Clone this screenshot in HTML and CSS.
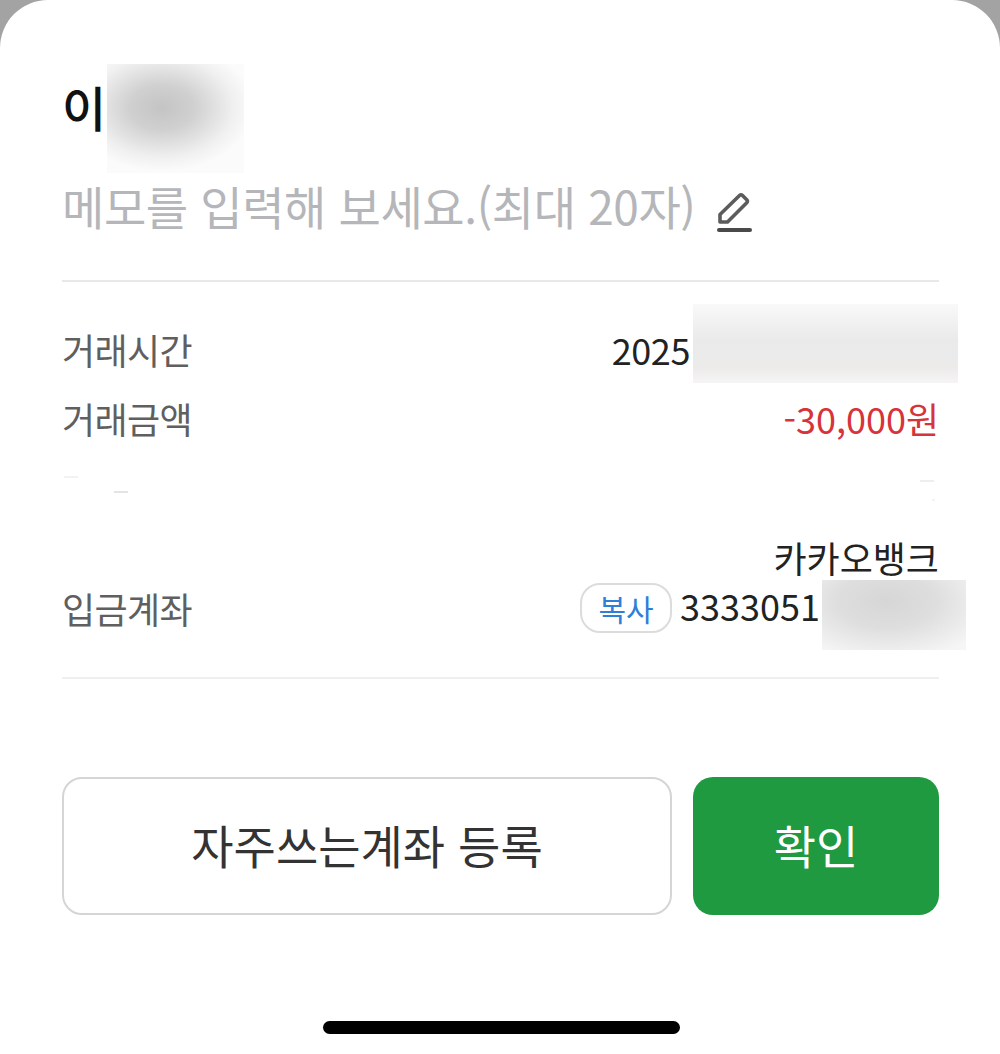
FILE: index.html
```html
<!DOCTYPE html>
<html lang="ko">
<head>
    <meta charset="UTF-8">
    <meta name="viewport" content="width=device-width, initial-scale=1.0">
    <title>거래 상세</title>
    <link rel="stylesheet" href="styles.css">
</head>
<body>
    <div class="sheet">
        <div class="name-row">
            <span class="name">이</span>
            <span class="blur blur-name"></span>
        </div>
        <div class="memo-row">
            <span class="memo">메모를 입력해 보세요.(최대 20자)</span>
            <svg class="edit-icon" width="36" height="42" viewBox="0 0 36 42" fill="none">
                <path d="M3 31 V23.5 L22.5 4.5 Q24 3 25.5 4.5 L30 9 Q31 10.5 29.5 12 L10.5 31 Z" stroke="#5c5c5c" stroke-width="3.6" stroke-linejoin="round"/>
                <path d="M2 39 H33" stroke="#4a4a4a" stroke-width="4" stroke-linecap="round"/>
            </svg>
        </div>

        <div class="details">
            <div class="detail-row row-time">
                <span class="label">거래시간</span>
                <span class="value value-time">2025<span class="blur blur-time"></span></span>
            </div>
            <div class="detail-row row-amount">
                <span class="label">거래금액</span>
                <span class="value amount">-30,000원</span>
            </div>
            <div class="detail-row row-hidden">
                <span class="speck speck-left"></span>
                <span class="speck speck-right"></span>
            </div>
            <div class="detail-row row-account">
                <span class="label">입금계좌</span>
                <div class="account">
                    <span class="value">카카오뱅크</span>
                    <div class="account-line">
                        <button class="copy" type="button">복사</button>
                        <span class="value account-no">3333051</span>
                        <span class="blur blur-account"></span>
                    </div>
                </div>
            </div>
        </div>

        <div class="actions">
            <button class="btn btn-favorite" type="button">자주쓰는계좌 등록</button>
            <button class="btn btn-ok" type="button">확인</button>
        </div>

        <div class="home-indicator"></div>
    </div>
</body>
</html>
```

FILE: styles.css
```css
* {
    box-sizing: border-box;
}
html, body {
    margin: 0;
    height: 100%;
}
body {
    background-color: #a3a3a3;
    font-family: "Noto Sans CJK KR", "Noto Sans", sans-serif;
    overflow: hidden;
}
.sheet {
    height: 1054px;
    background-color: #fff;
    border-radius: 48px 48px 0 0;
    padding: 64px 61px 0 62px;
    display: flex;
    flex-direction: column;
}
.name-row {
    display: flex;
    height: 109px;
}
.name {
    font-size: 48px;
    font-weight: 500;
    line-height: 84px;
    width: 45px;
    color: #111;
}
.blur {
    display: block;
    flex: none;
}
.blur-name {
    width: 137px;
    height: 109px;
    background: radial-gradient(ellipse 92px 64px at 40% 40%, #c4c4c4 0%, #d0d0d0 35%, #f0f0f0 78%, #fbfbfb 100%);
}
.memo-row {
    display: flex;
    align-items: center;
    gap: 22px;
    height: 74px;
    margin-top: -2px;
    padding-bottom: 2px;
}
.memo {
    font-size: 46px;
    line-height: 56px;
    letter-spacing: -0.4px;
    color: #b5b6ba;
    white-space: nowrap;
    margin-bottom: 4px;
}
.edit-icon {
    flex: none;
    margin-top: 10px;
}
.details {
    margin-top: 35px;
    border-top: 2px solid #e8e8ea;
    border-bottom: 2px solid #efeff0;
    height: 399px;
}
.detail-row {
    display: flex;
    justify-content: space-between;
    align-items: center;
}
.label {
    font-size: 36px;
    color: #5f5f5f;
    letter-spacing: -0.6px;
    line-height: 44px;
}
.value {
    font-size: 36px;
    line-height: 44px;
    color: #222;
}
.row-time {
    margin-top: 45px;
}
.value-time {
    display: flex;
    align-items: center;
    margin-right: -19px;
    height: 44px;
    letter-spacing: -0.4px;
}
.blur-time {
    width: 265px;
    height: 79px;
    margin-left: 3px;
    margin-bottom: 12px;
    background: linear-gradient(180deg, #f9f9f9 0%, #ebeaea 45%, #ecebea 80%, #f6f5f5 100%);
}
.row-amount {
    margin-top: 25px;
}
.amount {
    color: #d6333a;
}
.row-hidden {
    height: 30px;
    margin-top: 35px;
    align-items: flex-start;
}
.speck {
    display: block;
    background-repeat: no-repeat;
}
.speck-left {
    width: 66px;
    height: 20px;
    margin-left: 2px;
    background-image: linear-gradient(#f2f2f2, #f2f2f2), linear-gradient(#e4e4e4, #e4e4e4);
    background-size: 14px 2px, 14px 2px;
    background-position: 0 1px, 50px 16px;
}
.speck-right {
    width: 16px;
    height: 26px;
    margin-right: 3px;
    background-image: linear-gradient(#eeeeee, #eeeeee), linear-gradient(#f2f2f2, #f2f2f2);
    background-size: 14px 2px, 3px 2px;
    background-position: 0 5px, 12px 24px;
}
.row-account {
    margin-top: 30px;
    align-items: flex-end;
}
.row-account .label {
    margin-bottom: 1px;
}
.account {
    display: flex;
    flex-direction: column;
    align-items: flex-end;
}
.account-line {
    display: flex;
    align-items: center;
    height: 52px;
    margin-right: -27px;
}
.copy {
    width: 92px;
    height: 50px;
    padding: 0;
    border: 2px solid #dcdcdc;
    border-radius: 20px;
    background-color: #fff;
    color: #2f7ed8;
    font-family: inherit;
    font-size: 30px;
    line-height: 1;
    margin-top: 5px;
    margin-right: 8px;
}
.account-no {
    width: 142px;
    white-space: nowrap;
}
.blur-account {
    width: 144px;
    height: 70px;
    margin-top: 20px;
    background: radial-gradient(ellipse 110px 60px at 45% 30%, #d6d6d6 0%, #dedede 45%, #f6f6f6 100%);
}
.actions {
    display: flex;
    gap: 21px;
    margin-top: 98px;
}
.btn {
    height: 138px;
    font-family: inherit;
    font-size: 46px;
    padding: 0 0 5px;
}
.btn-favorite {
    width: 610px;
    background-color: #fff;
    border: 2px solid #d5d5d7;
    border-radius: 20px;
    color: #333;
}
.btn-ok {
    width: 246px;
    background-color: #1f9a41;
    border: none;
    border-radius: 20px;
    color: #fff;
}
.home-indicator {
    width: 357px;
    height: 13px;
    margin: 106px 0 0 261px;
    background-color: #000;
    border-radius: 7px;
}
```
